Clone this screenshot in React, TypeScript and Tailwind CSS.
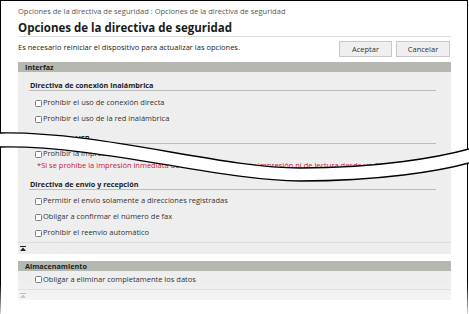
function Check() {
  return <span className="inline-block h-[7px] w-[7px] shrink-0 rounded-[1.5px] border border-[#7a7a7a] bg-white" />;
}

function Row({ label }: { label: string }) {
  return (
    <div className="flex h-[16px] items-center gap-[1px] pl-[6px]">
      <Check />
      <span>{label}</span>
    </div>
  );
}

function SubHeader({ title }: { title: string }) {
  return (
    <div className="h-[10px] border-b border-[#bcbcbc] pl-[1px] text-[7.25px] font-bold leading-[9px] text-[#222]">
      {title}
    </div>
  );
}

function TopIcon({ faded }: { faded?: boolean }) {
  return (
    <svg width="6" height="5" viewBox="0 0 6 5" className={faded ? "text-[#a8a8a8]" : "text-[#222]"}>
      <rect x="0" y="0" width="6" height="1" fill="currentColor" />
      <polygon points="0,5 3,1.6 6,5" fill="currentColor" />
    </svg>
  );
}

const UPPER = "M0 133 C100 131 220 168 300 168 C380 168 440 157 469 149";
const LOWER = "M0 147 C100 145 220 181 300 181 C380 181 440 171 469 163";
const BAND =
  "M0 133 C100 131 220 168 300 168 C380 168 440 157 469 149 L469 163 C440 171 380 181 300 181 C220 181 100 145 0 147 Z";

export default function App() {
  return (
    <div className="relative h-[314px] w-[469px] overflow-hidden bg-white font-['Open_Sans',sans-serif] text-[7.5px] text-[#333]">
      <div className="h-[330px] w-[468px] border-x border-t border-black pl-[17px] pr-[16px]">
        <p className="pt-[5px] leading-[10px] text-[#555]">
          Opciones de la directiva de seguridad : Opciones de la directiva de seguridad
        </p>
        <h1 className="mt-[4px] h-[17px] border-b border-[#dcdcdc] text-[11.5px] font-bold leading-[16px] text-[#1a1a1a]">
          Opciones de la directiva de seguridad
        </h1>
        <div className="mt-[4px] flex h-[16px] items-start justify-between pr-[1px]">
          <span className="mt-[1px] leading-[10px] text-[#222]">
            Es necesario reiniciar el dispositivo para actualizar las opciones.
          </span>
          <div className="flex gap-[4px]">
            <button className="h-[16px] w-[53px] border border-[#c8c8c8] bg-[#efefef] leading-[14px] text-[#333]">
              Aceptar
            </button>
            <button className="h-[16px] w-[54px] border border-[#c8c8c8] bg-[#efefef] leading-[14px] text-[#333]">
              Cancelar
            </button>
          </div>
        </div>

        <div className="mt-[5px] h-[10px] bg-[#b4b8b1] pl-[7px] text-[7.25px] font-bold leading-[10px] text-[#222]">
          Interfaz
        </div>
        <div className="bg-[#eeeeee] pt-[9px]">
          <div className="ml-[11px] mr-[15px]">
            <SubHeader title="Directiva de conexión inalámbrica" />
            <div className="mt-[4px]">
              <Row label="Prohibir el uso de conexión directa" />
              <Row label="Prohibir el uso de la red inalámbrica" />
            </div>
            <div className="mt-[7px]">
              <SubHeader title="Directiva de USB" />
            </div>
            <div className="mt-[3px] flex h-[14px] items-center gap-[1px] pl-[6px]">
              <Check />
              <span>Prohibir la impresión inmediata</span>
            </div>
            <p className="h-[9px] pl-[8px] leading-[9px] text-[#d0103a]">
              *Si se prohíbe la impresión inmediata de datos no se admite la impresión ni de lectura desde un PC.
            </p>
            <div className="mt-[10px]">
              <SubHeader title="Directiva de envío y recepción" />
            </div>
            <div className="mt-[3px]">
              <Row label="Permitir el envío solamente a direcciones registradas" />
              <Row label="Obligar a confirmar el número de fax" />
              <Row label="Prohibir el reenvío automático" />
            </div>
          </div>
          <div className="mt-[1px] flex h-[12px] items-center border-t border-[#dcdcdc] pl-[2px]">
            <TopIcon />
          </div>
        </div>

        <div className="mt-[7px] h-[10px] bg-[#b4b8b1] pl-[7px] text-[7.25px] font-bold leading-[10px] text-[#222]">
          Almacenamiento
        </div>
        <div className="bg-[#eeeeee]">
          <div className="ml-[11px] mr-[15px] pt-[1px]">
            <div className="flex h-[15px] items-center gap-[1px] pl-[6px]">
              <Check />
              <span>Obligar a eliminar completamente los datos</span>
            </div>
          </div>
          <div className="mt-[2px] flex h-[11px] items-center border-t border-[#dcdcdc] pl-[2px]">
            <TopIcon faded />
          </div>
        </div>
      </div>

      <svg className="pointer-events-none absolute left-0 top-0" width="469" height="314" viewBox="0 0 469 314">
        <path d={BAND} fill="white" />
        <path d={UPPER} fill="none" stroke="black" strokeWidth="1.3" />
        <path d={LOWER} fill="none" stroke="black" strokeWidth="1.3" />
      </svg>
      <div className="pointer-events-none absolute left-0 right-0 top-[284px] h-[36px] bg-linear-to-b from-white/0 to-white" />
    </div>
  );
}
